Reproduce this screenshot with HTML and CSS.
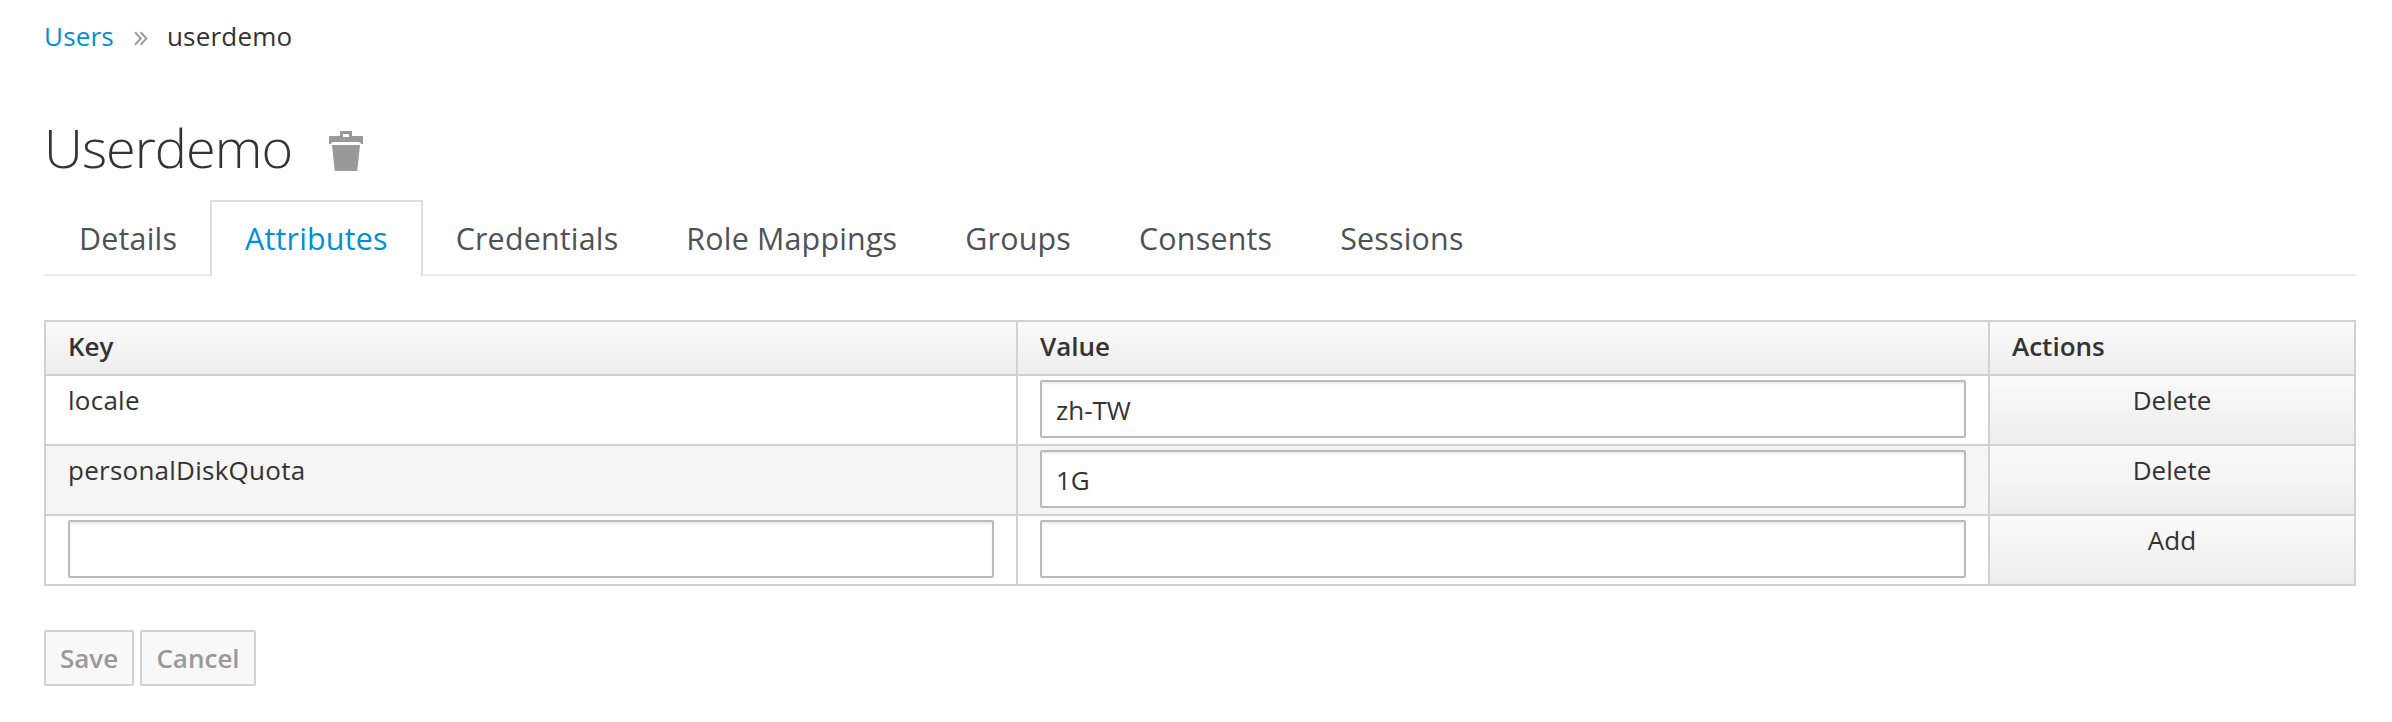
FILE: index.html
```html
<!DOCTYPE html>
<html lang="en">
<head>
<meta charset="utf-8">
<title>Userdemo</title>
<link rel="stylesheet" href="styles.css">
</head>
<body>
<ol class="breadcrumb">
  <li><a class="crumb-link" href="#">Users</a></li>
  <li class="crumb-separator"><svg width="14" height="15" viewBox="0 0 14 15"><path d="M1 1.2 6.8 7.5 1 13.8M6.6 1.2 12.4 7.5 6.6 13.8"/></svg></li>
  <li>userdemo</li>
</ol>
<h1 class="title">Userdemo
  <svg class="trash" width="36" height="42" viewBox="0 0 36 42"><path fill-rule="evenodd" d="M12 1h12v5h11v8h-2q0-2-3-2H6q-3 0-3 2H1V6h11zM15 4v3h6V4z"/><path d="M4 15h28l-2.8 26H6.8z"/></svg>
</h1>
<ul class="tabs">
  <li><a class="tab" href="#">Details</a></li>
  <li><a class="tab active" href="#">Attributes</a></li>
  <li><a class="tab" href="#">Credentials</a></li>
  <li><a class="tab" href="#">Role Mappings</a></li>
  <li><a class="tab" href="#">Groups</a></li>
  <li><a class="tab" href="#">Consents</a></li>
  <li><a class="tab" href="#">Sessions</a></li>
</ul>
<table class="attributes">
  <colgroup><col class="col-text"><col class="col-text"><col class="col-actions"></colgroup>
  <thead>
    <tr><th>Key</th><th>Value</th><th>Actions</th></tr>
  </thead>
  <tbody>
    <tr><td class="key">locale</td><td class="field"><input class="input" type="text" value="zh-TW"></td><td class="action">Delete</td></tr>
    <tr class="striped"><td class="key">personalDiskQuota</td><td class="field"><input class="input" type="text" value="1G"></td><td class="action">Delete</td></tr>
    <tr><td class="field"><input class="input" type="text"></td><td class="field"><input class="input" type="text"></td><td class="action">Add</td></tr>
  </tbody>
</table>
<div class="buttons">
  <button class="button save" disabled>Save</button>
  <button class="button cancel" disabled>Cancel</button>
</div>
</body>
</html>
```
FILE: styles.css
```css
* { box-sizing: border-box; }
body {
  margin: 0;
  padding: 18px 36px 0 44px;
  background: #fff;
  color: #333;
  font: 26px/36px "Open Sans", sans-serif;
  overflow: hidden;
}
a { text-decoration: none; }
.breadcrumb { display: flex; margin: 0; padding: 0; list-style: none; letter-spacing: .2px; }
.crumb-link { color: #0090da; }
.crumb-separator { display: flex; align-items: center; padding: 4px 19px 0 20px; }
.crumb-separator svg { fill: none; stroke: #9c9c9c; stroke-width: 2; }
.title {
  display: flex;
  align-items: center;
  gap: 36px;
  height: 74px;
  margin: 56px 0 0;
  font-size: 54px;
  font-weight: 300;
  line-height: 74px;
  letter-spacing: -.96px;
}
.trash { fill: #999; margin-top: 8px; }
.tabs {
  display: flex;
  height: 76px;
  margin: 16px 0 44px;
  padding: 0;
  border-bottom: 2px solid #e9e9e9;
  list-style: none;
}
.tab {
  display: block;
  height: 76px;
  margin-right: -2px;
  padding: 16px 33px 0;
  border: 2px solid transparent;
  border-bottom: 0;
  color: #4d5258;
  font-size: 30.4px;
  line-height: 41px;
  letter-spacing: .2px;
}
.tab.active { border-color: #ddd; background: #fff; color: #0090da; }
.attributes {
  width: 2312px;
  table-layout: fixed;
  border-collapse: collapse;
}
.col-text { width: 972px; }
.col-actions { width: 366px; }
.attributes th, .attributes td {
  height: 70px;
  padding: 6px 22px 0;
  border: 2px solid #d1d1d1;
  text-align: left;
  vertical-align: top;
}
.attributes th {
  height: 54px;
  font-weight: 600;
  background: linear-gradient(#fafafa, #ededed);
}
.attributes .key { letter-spacing: .25px; }
.attributes .field { padding-top: 4px; }
.attributes .action { text-align: center; background: linear-gradient(#fafafa, #ededed); }
.striped { background: #f5f5f5; }
.input {
  display: block;
  width: 100%;
  height: 58px;
  padding: 1px 14px 0;
  border: 2px solid #bababa;
  border-radius: 2px;
  background: #fff;
  box-shadow: inset 0 2px 2px rgba(3, 3, 3, .075);
  color: #333;
  font: inherit;
}
.buttons { display: flex; gap: 6px; margin-top: 44px; }
.button {
  height: 56px;
  padding: 0;
  border: 2px solid #d1d1d1;
  border-radius: 2px;
  background: #f8f8f8;
  color: #999;
  font: 600 26px/36px "Open Sans", sans-serif;
}
.save { width: 90px; }
.cancel { width: 116px; }
```
